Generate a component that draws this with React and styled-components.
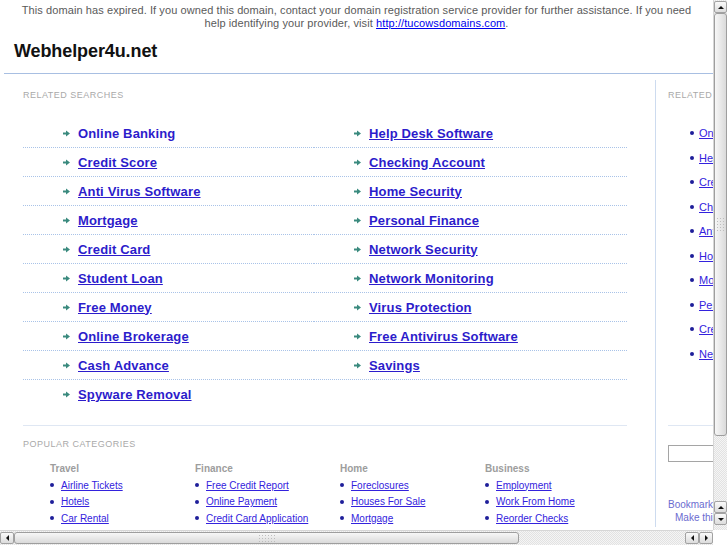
import React from 'react';
import styled, { createGlobalStyle } from 'styled-components';

const Global = createGlobalStyle`
  html, body { margin: 0; overflow: hidden; background: #fff; }
  body { font-family: "Liberation Sans", Arial, sans-serif; }
`;

/* ---------- browser frame with scrollbars ---------- */

const Frame = styled.div`
  width: 727px;
  height: 545px;
  display: grid;
  grid-template-columns: 713px 14px;
  grid-template-rows: 530px 15px;
  overflow: hidden;
`;

const Viewport = styled.div`
  overflow: hidden;
  background: #fff;
`;

const checker = 'repeating-conic-gradient(#e2e2e2 0 25%, #f5f5f5 0 50%) 0 0 / 2px 2px';

const VBar = styled.div`
  display: flex;
  flex-direction: column;
  align-items: stretch;
  padding: 1px 0 5px;
  box-sizing: border-box;
  background: ${checker};
  border-left: 1px solid #d6d6d6;
`;

const HBar = styled.div`
  display: flex;
  align-items: stretch;
  padding: 1px 0 1px;
  box-sizing: border-box;
  background: ${checker};
  border-top: 1px solid #d6d6d6;
`;

const Corner = styled.div`
  background: #fff;
`;

const Btn = styled.div`
  flex: none;
  ${p => (p.$vertical ? 'height: 12px;' : 'width: 14px;')}
  box-sizing: border-box;
  border: 1px solid #a2a2a2;
  border-radius: 2px;
  background: linear-gradient(${p => (p.$vertical ? 'to bottom' : 'to bottom')}, #fafafa, #dcdcdc);
  display: flex;
  align-items: center;
  justify-content: center;
`;

const Thumb = styled.div`
  flex: none;
  ${p => (p.$vertical ? 'height: 423px;' : 'width: 505px;')}
  box-sizing: border-box;
  border: 1px solid #9e9e9e;
  border-radius: 3px;
  background: linear-gradient(${p => (p.$vertical ? 'to right' : 'to bottom')}, #f7f7f7, #dadada);
  display: flex;
  align-items: center;
  justify-content: center;
`;

const Grip = styled.div`
  ${p => (p.$vertical ? 'width: 9px; height: 15px;' : 'width: 17px; height: 9px;')}
  background: radial-gradient(circle, #bdbdbd 0.8px, transparent 1px) 0 0 / 3px 3px;
`;

const Spacer = styled.div`
  flex: 1;
`;

const Tri = ({ dir }) => {
  const pts = {
    up: '0,4 3,1 6,4',
    down: '0,1 3,4 6,1',
    left: '4,0 1,3 4,6',
    right: '1,0 4,3 1,6',
  }[dir];
  const vert = dir === 'up' || dir === 'down';
  return (
    <svg width={vert ? 6 : 5} height={vert ? 5 : 6} viewBox={vert ? '0 0 6 5' : '0 0 5 6'}>
      <polygon points={pts} fill="#111" />
    </svg>
  );
};

/* ---------- page ---------- */

const Notice = styled.div`
  padding: 4px 20px 0;
  font-size: 11px;
  line-height: 13px;
  letter-spacing: 0.09px;
  color: #5a5a5a;
  text-align: center;
  a { color: #0000ee; }
`;

const Wrapper = styled.div`
  width: 939px;
  margin-left: 4px;
  padding-bottom: 30px;
`;

const Header = styled.div`
  height: 43px;
  padding-left: 10px;
  border-bottom: 1px solid #a8bfe2;
  display: flex;
  align-items: center;
`;

const Title = styled.h1`
  margin: 0;
  font-size: 18px;
  font-weight: bold;
  color: #111;
  letter-spacing: -0.1px;
`;

const Content = styled.div`
  display: flex;
  margin-top: 6px;
`;

const Main = styled.div`
  width: 651px;
  padding: 10px 0 0 19px;
  box-sizing: border-box;
`;

const SectionLabel = styled.div`
  font-size: 9px;
  line-height: 11px;
  letter-spacing: 0.5px;
  color: #a9a9a9;
  text-transform: uppercase;
  margin-top: ${p => p.$top || 0}px;
  white-space: nowrap;
`;

const SearchGrid = styled.ul`
  list-style: none;
  margin: 18px 0 0;
  padding: 0;
  display: grid;
  grid-template-columns: 291px 313px;
`;

const SearchItem = styled.li`
  height: ${p => (p.$first ? 28 : 29)}px;
  box-sizing: border-box;
  padding-left: 40px;
  display: flex;
  align-items: center;
  gap: 8px;
  border-top: ${p => (p.$first ? 'none' : '1px dotted #a9c3e8')};
`;

const SearchLink = styled.a`
  font-size: 13px;
  font-weight: bold;
  color: #2c1ccb;
  text-decoration: ${p => (p.$plain ? 'none' : 'underline')};
  letter-spacing: 0.15px;
`;

const Divider = styled.div`
  width: 604px;
  height: 1px;
  background: #dfe7f3;
  margin-top: 17px;
`;

const CatGrid = styled.div`
  display: grid;
  grid-template-columns: repeat(4, 145px);
  margin: 12px 0 0 27px;
`;

const CatTitle = styled.div`
  font-size: 10px;
  font-weight: bold;
  line-height: 13px;
  color: #9d9d9d;
  margin-bottom: 2px;
`;

const CatList = styled.ul`
  list-style: none;
  margin: 0;
  padding: 0;
`;

const CatItem = styled.li`
  height: 16.5px;
  display: flex;
  align-items: center;
  gap: 7px;
`;

const Dot = styled.span`
  width: 4px;
  height: 4px;
  border-radius: 50%;
  background: #1e1e9a;
  flex: none;
`;

const SmallLink = styled.a`
  font-size: ${p => p.$size || 10}px;
  color: #3322dd;
  text-decoration: underline;
  white-space: nowrap;
`;

const Sidebar = styled.div`
  width: 288px;
  box-sizing: border-box;
  border-left: 1px solid #cddbef;
  padding: 10px 0 0 12px;
`;

const SideList = styled.ul`
  list-style: none;
  margin: 20px 0 0;
  padding: 0 0 0 22px;
`;

const SideItem = styled.li`
  height: 24.5px;
  display: flex;
  align-items: center;
  gap: 5px;
`;

const SideRule = styled.div`
  height: 1px;
  width: 250px;
  background: #dfe7f3;
  margin-top: 59px;
`;

const SearchInput = styled.input`
  display: block;
  margin-top: 19px;
  width: 150px;
  height: 17px;
  box-sizing: border-box;
  border: 1px solid #a5a5a5;
  padding: 0;
`;

const Bookmark = styled.div`
  font-size: 10px;
  line-height: 13px;
  color: #6b6bd0;
  white-space: nowrap;
  padding-left: ${p => p.$indent || 0}px;
  margin-top: ${p => p.$top || 0}px;
`;

const Arrow = () => (
  <svg width="7" height="7" viewBox="0 0 7 7" style={{ flex: 'none' }}>
    <rect x="0" y="2.5" width="4" height="2" fill="#3a8a7e" />
    <polygon points="3,0.5 7,3.5 3,6.5" fill="#3a8a7e" />
  </svg>
);

const searches = [
  'Online Banking', 'Help Desk Software',
  'Credit Score', 'Checking Account',
  'Anti Virus Software', 'Home Security',
  'Mortgage', 'Personal Finance',
  'Credit Card', 'Network Security',
  'Student Loan', 'Network Monitoring',
  'Free Money', 'Virus Protection',
  'Online Brokerage', 'Free Antivirus Software',
  'Cash Advance', 'Savings',
  'Spyware Removal',
];

const categories = [
  { title: 'Travel', links: ['Airline Tickets', 'Hotels', 'Car Rental'] },
  { title: 'Finance', links: ['Free Credit Report', 'Online Payment', 'Credit Card Application'] },
  { title: 'Home', links: ['Foreclosures', 'Houses For Sale', 'Mortgage'] },
  { title: 'Business', links: ['Employment', 'Work From Home', 'Reorder Checks'] },
];

const sideLinks = searches.slice(0, 10);

export default function App() {
  return (
    <>
      <Global />
      <Frame>
        <Viewport>
          <Notice>
            This domain has expired. If you owned this domain, contact your domain registration service provider for further assistance. If you need help identifying your provider, visit <a href="#">http://tucowsdomains.com</a>.
          </Notice>
          <Wrapper>
            <Header>
              <Title>Webhelper4u.net</Title>
            </Header>
            <Content>
              <Main>
                <SectionLabel>Related Searches</SectionLabel>
                <SearchGrid>
                  {searches.map((s, i) => (
                    <SearchItem key={s} $first={i < 2}>
                      <Arrow />
                      <SearchLink href="#" $plain={i === 0}>{s}</SearchLink>
                    </SearchItem>
                  ))}
                  <SearchItem aria-hidden="true" />
                </SearchGrid>
                <Divider />
                <SectionLabel $top={13}>Popular Categories</SectionLabel>
                <CatGrid>
                  {categories.map(c => (
                    <div key={c.title}>
                      <CatTitle>{c.title}</CatTitle>
                      <CatList>
                        {c.links.map(l => (
                          <CatItem key={l}>
                            <Dot />
                            <SmallLink href="#">{l}</SmallLink>
                          </CatItem>
                        ))}
                      </CatList>
                    </div>
                  ))}
                </CatGrid>
              </Main>
              <Sidebar>
                <SectionLabel>Related Searches</SectionLabel>
                <SideList>
                  {sideLinks.map(s => (
                    <SideItem key={s}>
                      <Dot />
                      <SmallLink href="#" $size={11}>{s}</SmallLink>
                    </SideItem>
                  ))}
                </SideList>
                <SideRule />
                <SearchInput type="text" />
                <Bookmark $top={36}>Bookmark this page</Bookmark>
                <Bookmark $indent={7}>Make this your homepage</Bookmark>
              </Sidebar>
            </Content>
          </Wrapper>
        </Viewport>
        <VBar>
          <Btn $vertical><Tri dir="up" /></Btn>
          <Thumb $vertical><Grip $vertical /></Thumb>
          <Spacer />
          <Btn $vertical><Tri dir="up" /></Btn>
          <Btn $vertical><Tri dir="down" /></Btn>
        </VBar>
        <HBar>
          <Btn><Tri dir="left" /></Btn>
          <Thumb><Grip /></Thumb>
          <Spacer />
          <Btn><Tri dir="left" /></Btn>
          <Btn><Tri dir="right" /></Btn>
        </HBar>
        <Corner />
      </Frame>
    </>
  );
}
